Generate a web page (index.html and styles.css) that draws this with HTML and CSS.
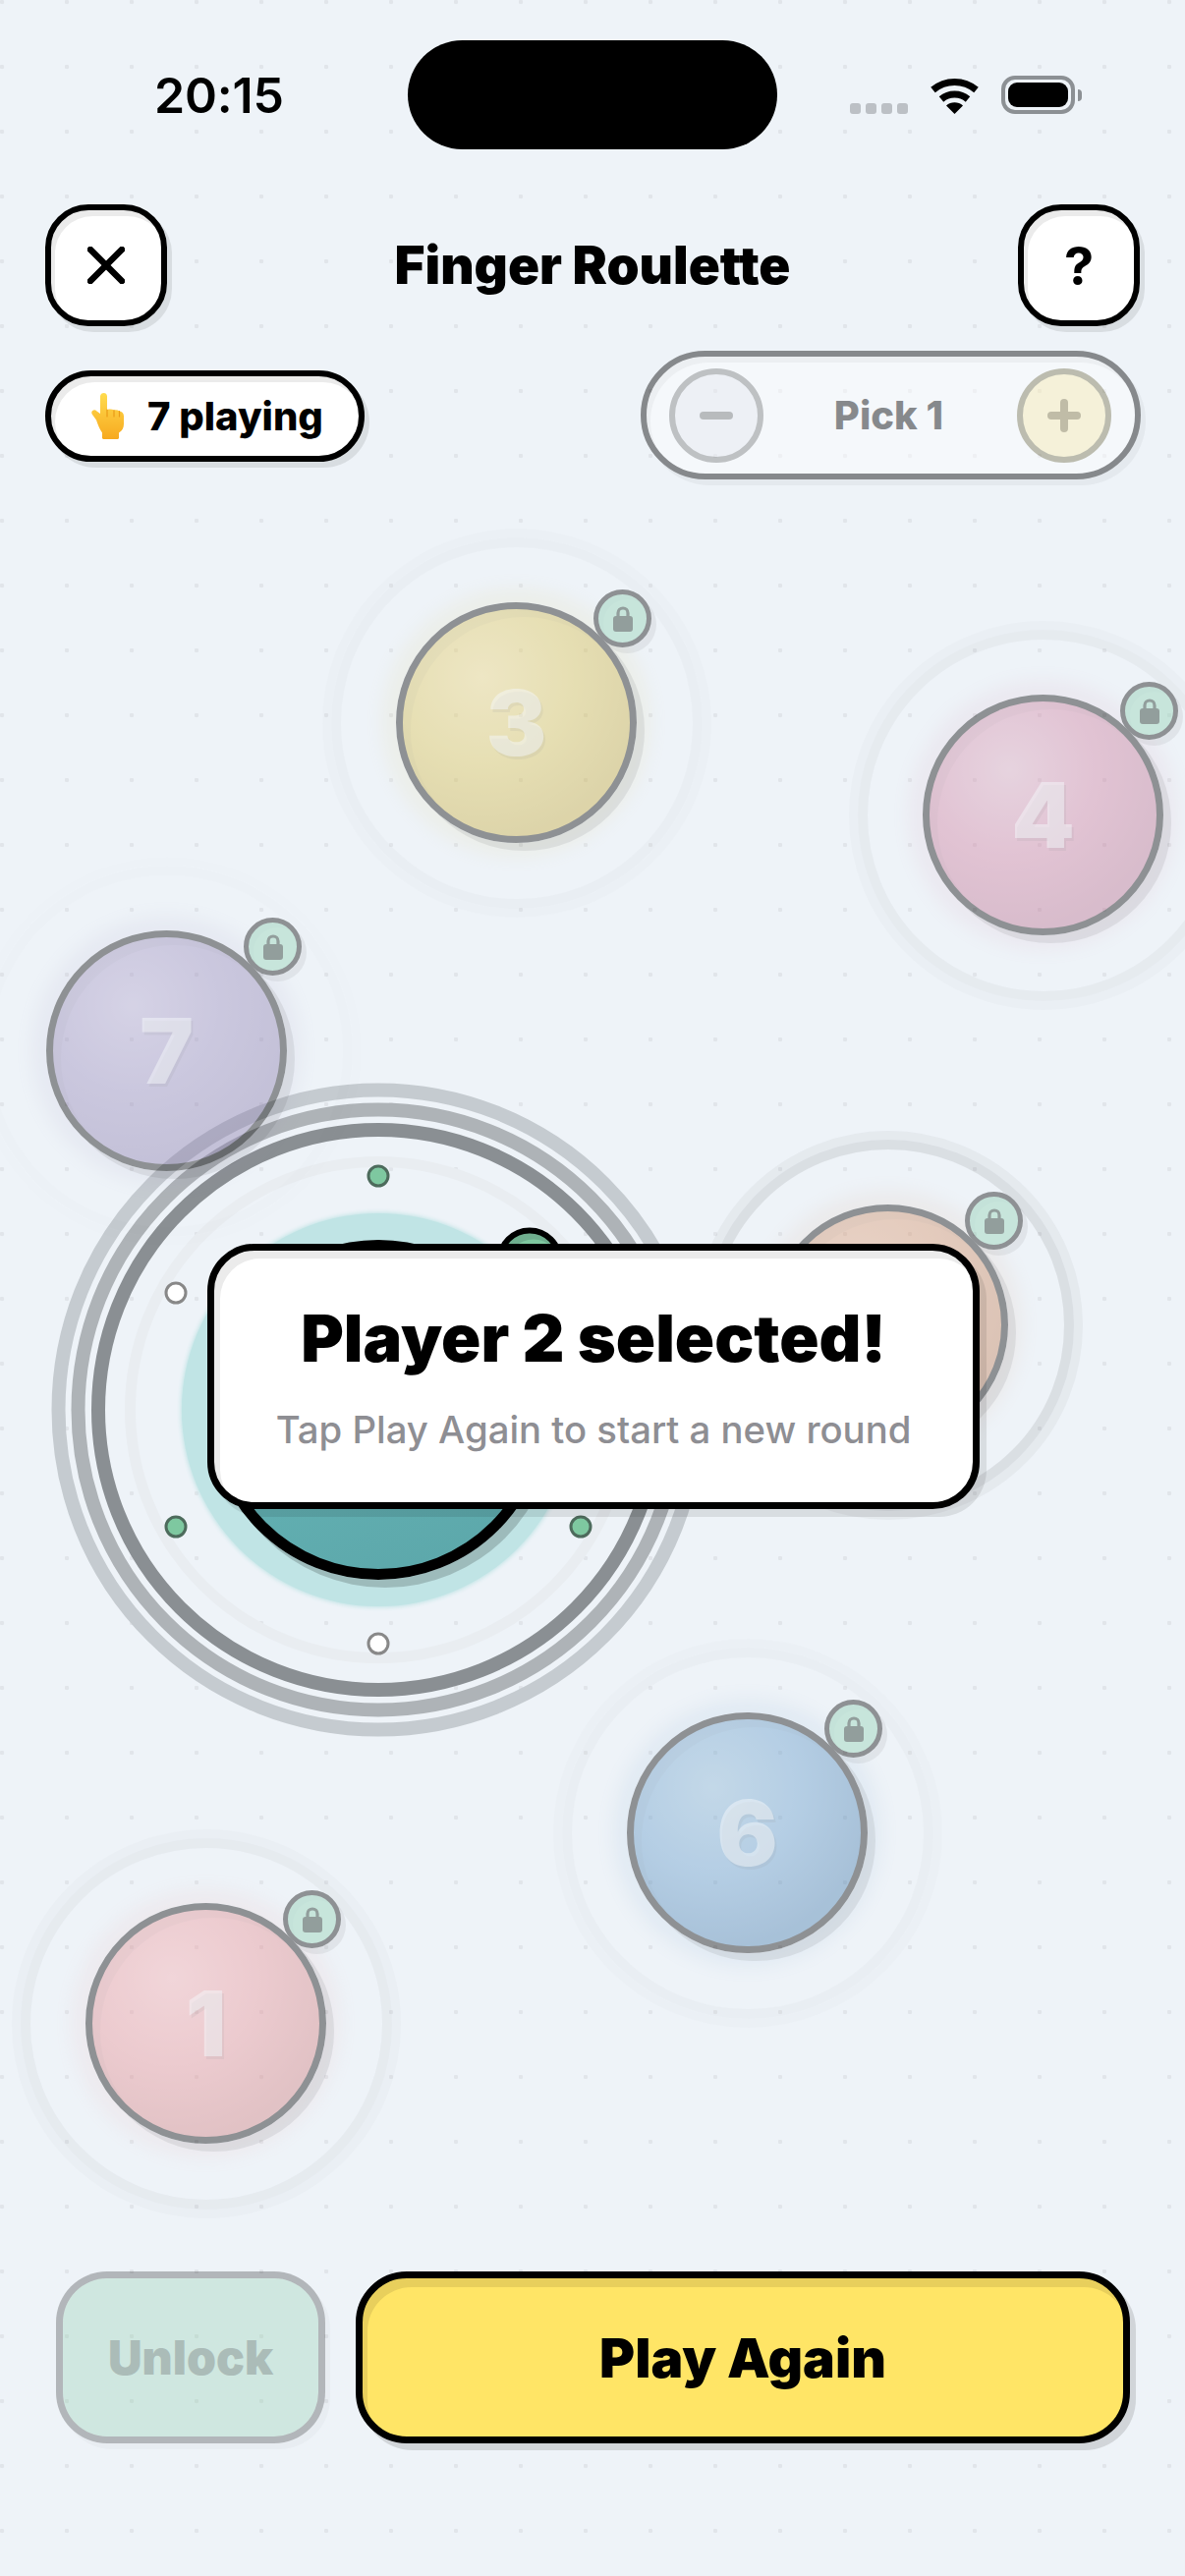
FILE: index.html
```html
<!DOCTYPE html>
<html lang="en">
<head>
  <meta charset="UTF-8" />
  <meta name="viewport" content="width=device-width, initial-scale=1.0"/>
  <title>Finger Roulette</title>
  <link rel="stylesheet" href="styles.css">
</head>
<body>
  <div class="screen">

    <!-- fingers on the table -->
    <div class="stage">
      <div class="chosen">
        <span class="halo halo-1"></span>
        <span class="halo halo-2"></span>
        <span class="halo halo-3"></span>
        <span class="halo halo-4"></span>
        <span class="glow"></span>
        <span class="disc"></span>
        <span class="chosen-badge"></span>
        <span class="spark spark-top"></span>
        <span class="spark spark-left white"></span>
        <span class="spark spark-low-left"></span>
        <span class="spark spark-low-right"></span>
        <span class="spark spark-bottom white"></span>
      </div>

      <div class="player p1 rings-mid">
        <span class="ring ring-in"></span><span class="ring ring-out"></span>
        <div class="coin">1</div>
        <span class="lock"><svg viewBox="0 0 24 30"><path d="M7 14V9a5 5 0 0 1 10 0v5" fill="none" stroke="currentColor" stroke-width="3.2"/><rect x="2" y="12" width="20" height="16" rx="3" fill="currentColor"/></svg></span>
      </div>
      <div class="player p3 rings-low">
        <span class="ring ring-in"></span><span class="ring ring-out"></span>
        <div class="coin">3</div>
        <span class="lock"><svg viewBox="0 0 24 30"><path d="M7 14V9a5 5 0 0 1 10 0v5" fill="none" stroke="currentColor" stroke-width="3.2"/><rect x="2" y="12" width="20" height="16" rx="3" fill="currentColor"/></svg></span>
      </div>
      <div class="player p4 rings-mid">
        <span class="ring ring-in"></span><span class="ring ring-out"></span>
        <div class="coin">4</div>
        <span class="lock"><svg viewBox="0 0 24 30"><path d="M7 14V9a5 5 0 0 1 10 0v5" fill="none" stroke="currentColor" stroke-width="3.2"/><rect x="2" y="12" width="20" height="16" rx="3" fill="currentColor"/></svg></span>
      </div>
      <!-- number of this one sits behind the popup -->
      <div class="player p5 rings-high">
        <span class="ring ring-in"></span><span class="ring ring-out"></span>
        <div class="coin"></div>
        <span class="lock"><svg viewBox="0 0 24 30"><path d="M7 14V9a5 5 0 0 1 10 0v5" fill="none" stroke="currentColor" stroke-width="3.2"/><rect x="2" y="12" width="20" height="16" rx="3" fill="currentColor"/></svg></span>
      </div>
      <div class="player p6 rings-low">
        <span class="ring ring-in"></span><span class="ring ring-out"></span>
        <div class="coin">6</div>
        <span class="lock"><svg viewBox="0 0 24 30"><path d="M7 14V9a5 5 0 0 1 10 0v5" fill="none" stroke="currentColor" stroke-width="3.2"/><rect x="2" y="12" width="20" height="16" rx="3" fill="currentColor"/></svg></span>
      </div>
      <div class="player p7 rings-faint">
        <span class="ring ring-in"></span><span class="ring ring-out"></span>
        <div class="coin">7</div>
        <span class="lock"><svg viewBox="0 0 24 30"><path d="M7 14V9a5 5 0 0 1 10 0v5" fill="none" stroke="currentColor" stroke-width="3.2"/><rect x="2" y="12" width="20" height="16" rx="3" fill="currentColor"/></svg></span>
      </div>

      <div class="result-card">
        <h2>Player 2 selected!</h2>
        <p>Tap Play Again to start a new round</p>
      </div>
    </div>

    <div class="status-bar">
      <div class="clock">20:15</div>
      <div class="island"></div>
      <div class="status-icons">
        <div class="signal"><span></span><span></span><span></span><span></span></div>
        <svg class="wifi" viewBox="0 0 51 38">
          <path d="M3.5 13.5a34 34 0 0 1 44 0" fill="none" stroke="#000" stroke-width="7"/>
          <path d="M12 23a21 21 0 0 1 27 0" fill="none" stroke="#000" stroke-width="7"/>
          <path d="M25.5 38 17 29.5a13 13 0 0 1 17 0z" fill="#000"/>
        </svg>
        <div class="battery"><span></span></div>
        <span class="battery-nub"></span>
      </div>
    </div>

    <div class="top-bar">
      <button class="square-btn" aria-label="Close">
        <svg viewBox="0 0 38 38" width="38" height="38"><path d="M3 3l32 32M35 3L3 35" fill="none" stroke="#000" stroke-width="6.5" stroke-linecap="round"/></svg>
      </button>
      <h1>Finger Roulette</h1>
      <button class="square-btn help">?</button>
    </div>

    <div class="sub-bar">
      <div class="count-pill">
        <svg class="hand" viewBox="0 0 33 47">
          <defs>
            <linearGradient id="skin" x1="0" y1="0" x2="0" y2="1">
              <stop offset="0" stop-color="#ffdc4e"/>
              <stop offset="1" stop-color="#f7a91f"/>
            </linearGradient>
          </defs>
          <path d="M9 3.5C9 1 11 0 12.7 0s3.3 1 3.3 3.5V17c3-.8 5.500-.5 7 .5 2-.6 4-.2 5.500 1 2.500.2 4.500 2 4.500 5v8c0 4-1.500 7-5 9v5c0 1-1 1.500-2 1.500H13c-1 0-2-.5-2-1.500v-5C8 36 6.500 32 5 27.500L1 22c-1-1.500-1-3 .2-4 1.300-1 3-.8 4.300.5L9 21z" fill="url(#skin)"/>
          <path d="M16 17v7M23 17.500V24M28.500 18.500V24" fill="none" stroke="#e99a17" stroke-width="1.200" stroke-linecap="round"/>
        </svg>
        <span>7 playing</span>
      </div>
      <div class="stepper">
        <button class="step-btn minus"><i></i></button>
        <span class="step-label">Pick 1</span>
        <button class="step-btn plus"><i></i><i></i></button>
      </div>
    </div>

    <div class="spacer"></div>

    <div class="bottom-bar">
      <button class="big-btn unlock">Unlock</button>
      <button class="big-btn again">Play Again</button>
    </div>
  </div>
</body>
</html>
```

FILE: styles.css
```css
* {
  box-sizing: border-box;
}

body {
  margin: 0;
  font-family: Inter, "Liberation Sans", sans-serif;
  background: #eef3f8;
}

button {
  font-family: inherit;
  padding: 0;
  cursor: pointer;
}

.screen {
  position: relative;
  width: 1206px;
  height: 2622px;
  overflow: hidden;
  display: flex;
  flex-direction: column;
  background-color: #eef3f8;
  background-image: radial-gradient(circle at 2px 2px, #e1e5ea 2px, transparent 2.6px);
  background-size: 66px 66px;
}

/* status bar */
.status-bar {
  position: relative;
  display: grid;
  grid-template-columns: 415px 376px 415px;
  align-items: center;
  margin-top: 41px;
  height: 111px;
}

.clock {
  padding-left: 157px;
  font-size: 50px;
  font-weight: 600;
  letter-spacing: -0.2px;
  color: #000;
}

.island {
  height: 111px;
  background: #000;
  border-radius: 56px;
}

.status-icons {
  display: flex;
  align-items: center;
  padding-left: 74px;
}

.signal {
  display: flex;
  gap: 5.500px;
  margin-top: 28px;
  margin-right: 22px;
}

.signal span {
  width: 10.500px;
  height: 10.500px;
  border-radius: 3px;
  background: #bcc0c5;
}

.wifi {
  width: 51px;
  height: 38px;
  margin-right: 22px;
}

.battery {
  width: 75px;
  height: 39px;
  padding: 3px;
  border: 4px solid #8c9094;
  border-radius: 14px;
}

.battery span {
  display: block;
  height: 100%;
  border-radius: 9px;
  background: #000;
}

.battery-nub {
  width: 4px;
  height: 12px;
  margin-left: 3px;
  background: #8c9094;
  border-radius: 0 4px 4px 0;
}

/* header */
.top-bar {
  position: relative;
  display: flex;
  justify-content: space-between;
  align-items: center;
  margin-top: 56px;
  padding: 0 46px;
}

.top-bar h1 {
  margin: 0;
  font-size: 53px;
  font-weight: 900;
  color: #000;
}

.square-btn {
  display: flex;
  align-items: center;
  justify-content: center;
  width: 124px;
  height: 124px;
  border: 6px solid #000;
  border-radius: 44px;
  background: #fff;
  color: #000;
  box-shadow: 5px 6px 0 rgba(0, 0, 0, 0.09), inset 4px 6px 0 #ebebeb;
}

.help {
  font-size: 54px;
  font-weight: 700;
}

.sub-bar {
  position: relative;
  display: flex;
  justify-content: space-between;
  align-items: flex-start;
  margin-top: 25px;
  padding: 0 45px 0 46px;
}

.count-pill {
  display: flex;
  align-items: center;
  gap: 24px;
  height: 93px;
  margin-top: 20px;
  padding: 0 36px 0 41px;
  border: 6px solid #000;
  border-radius: 47px;
  background: #fff;
  box-shadow: 5px 6px 0 rgba(0, 0, 0, 0.09), inset 4px 6px 0 #ebebeb;
  font-size: 40px;
  font-weight: 800;
  color: #000;
}

.hand {
  width: 33px;
  height: 47px;
}

.stepper {
  display: flex;
  align-items: center;
  justify-content: space-between;
  width: 509px;
  height: 131px;
  padding: 0 24px 0 23px;
  border: 6px solid #000;
  border-radius: 66px;
  background: #fff;
  opacity: 0.43;
  box-shadow: 5px 6px 0 rgba(0, 0, 0, 0.09), inset 4px 6px 0 #ebebeb;
}

.step-btn {
  position: relative;
  width: 96px;
  height: 96px;
  border: 6px solid #808080;
  border-radius: 50%;
  background: #edeef3;
}

.step-btn i {
  position: absolute;
  left: 25px;
  top: 38px;
  width: 34px;
  height: 8px;
  border-radius: 4px;
  background: #727272;
}

.plus {
  border-color: #7b7651;
  background: #fff0b1;
}

.plus i {
  background: #84753f;
}

.plus i + i {
  left: 38px;
  top: 25px;
  width: 8px;
  height: 34px;
}

.step-label {
  margin-right: 3px;
  font-size: 40px;
  font-weight: 800;
  color: #000;
}

.spacer {
  flex: 1;
}

/* bottom buttons */
.bottom-bar {
  position: relative;
  display: flex;
  gap: 31px;
  padding: 0 56px 135px 57px;
}

.big-btn {
  height: 175px;
  border: 7px solid #000;
  border-radius: 52px;
  font-weight: 900;
}

.unlock {
  width: 274px;
  border-color: rgba(0, 0, 0, 0.25);
  background: rgba(127, 200, 160, 0.27);
  background-clip: padding-box;
  box-shadow: 5px 6px 0 rgba(0, 0, 0, 0.025);
  font-size: 48px;
  color: #abbcb8;
}

.again {
  flex: 1;
  background: #ffe566;
  box-shadow: 6px 7px 0 rgba(0, 0, 0, 0.12), inset 5px 9px 0 #e8cf5c;
  font-size: 55px;
  color: #000;
}

/* table */
.stage {
  position: absolute;
  inset: 0;
}

.chosen {
  position: absolute;
  left: 384.500px;
  top: 1435px;
  width: 0;
  height: 0;
}

.chosen > span {
  position: absolute;
  border-radius: 50%;
  transform: translate(-50%, -50%);
}

.halo-1 {
  width: 665px;
  height: 665px;
  border: 14px solid #c5cbd0;
}

.halo-2 {
  width: 625px;
  height: 625px;
  border: 14px solid #aeb3b7;
}

.halo-3 {
  width: 584px;
  height: 584px;
  border: 14px solid #8a8f93;
}

.halo-4 {
  width: 516px;
  height: 516px;
  border: 11px solid #e9edf1;
}

.glow {
  width: 400px;
  height: 400px;
  background: #c0e4e5;
  box-shadow: 0 0 4px 1px #c0e4e5;
}

.disc {
  width: 346px;
  height: 346px;
  border: 11px solid #000;
  background: linear-gradient(160deg, #6cbcbd, #5ba6a9);
  box-shadow: 7px 8px 0 rgba(0, 0, 0, 0.18);
}

.chosen .chosen-badge {
  left: 154.500px;
  top: -152px;
  width: 67px;
  height: 67px;
  border: 6px solid #000;
  background: #7fc8a0;
  box-shadow: inset 4px 6px 0 #6fae8e;
}

.spark {
  width: 23px;
  height: 23px;
  border: 3px solid #4d6b5c;
  background: #7ec8a0;
}

.spark.white {
  border-color: #888;
  background: #fff;
}

.spark-top {
  left: 0;
  top: -238px;
}

.spark-left {
  left: -206px;
  top: -119px;
}

.spark-low-left {
  left: -206px;
  top: 119px;
}

.spark-low-right {
  left: 206px;
  top: 119px;
}

.spark-bottom {
  left: 0;
  top: 238px;
}

.player {
  position: absolute;
  width: 245px;
  height: 245px;
  opacity: 0.4;
}

.p1 {
  left: 87px;
  top: 1937px;
  --light: #f6aaac;
  --base: #ea9093;
  --dark: #d07a7a;
}

.p3 {
  left: 403px;
  top: 613px;
  --light: #eed478;
  --base: #dcc24e;
  --dark: #c4a736;
}

.p4 {
  left: 939px;
  top: 707px;
  --light: #dca5ba;
  --base: #d07d9e;
  --dark: #b86b8b;
}

.p5 {
  left: 781px;
  top: 1226px;
  --light: #e2a47e;
  --base: #d69166;
  --dark: #c07d54;
}

.p6 {
  left: 638px;
  top: 1743px;
  --light: #85b1d2;
  --base: #6098c8;
  --dark: #3f77a9;
}

.p7 {
  left: 47px;
  top: 947px;
  --light: #b1a3cb;
  --base: #9788b9;
  --dark: #8677a9;
}

.ring {
  position: absolute;
  left: 50%;
  top: 50%;
  border-radius: 50%;
  border-style: solid;
  border-color: rgba(0, 0, 0, var(--ring-alpha));
  transform: translate(-50%, -50%);
}

.ring-in {
  width: 378px;
  height: 378px;
  border-width: 10px;
}

.ring-out {
  width: 396px;
  height: 396px;
  border-width: 9px;
  border-color: rgba(0, 0, 0, calc(var(--ring-alpha) * 0.45));
}

.rings-high {
  --ring-alpha: 0.2;
}

.rings-mid {
  --ring-alpha: 0.08;
}

.rings-low {
  --ring-alpha: 0.04;
}

.rings-faint {
  --ring-alpha: 0.012;
}

.coin {
  position: relative;
  display: flex;
  align-items: center;
  justify-content: center;
  width: 245px;
  height: 245px;
  border: 7px solid #000;
  border-radius: 50%;
  background: radial-gradient(circle at 35% 30%, var(--light), var(--base) 40%, var(--dark) 75%);
  box-shadow: 8px 8px 0 rgba(0, 0, 0, 0.18), inset 8px 8px 0 rgba(0, 0, 0, 0.06), 0 0 16px 14px color-mix(in srgb, var(--base) 20%, transparent);
  font-size: 92px;
  font-weight: 900;
  color: rgba(255, 255, 255, 0.5);
  text-shadow: 2px 3px 0 rgba(0, 0, 0, 0.12);
}

.lock {
  position: absolute;
  left: 201px;
  top: -13px;
  display: flex;
  align-items: center;
  justify-content: center;
  width: 59px;
  height: 59px;
  border: 5px solid #000;
  border-radius: 50%;
  background: #8ed2b2;
  color: #0a2015;
  box-shadow: 5px 6px 0 rgba(0, 0, 0, 0.14), inset 5px 5px 0 rgba(0, 0, 0, 0.04);
}

.lock svg {
  width: 24px;
  height: 30px;
}

/* popup over everything */
.result-card {
  position: absolute;
  left: 211px;
  top: 1266px;
  display: flex;
  flex-direction: column;
  align-items: center;
  width: 786px;
  height: 270px;
  padding-top: 50px;
  border: 7px solid #000;
  border-radius: 48px;
  background: #fff;
  box-shadow: 7px 8px 0 rgba(0, 0, 0, 0.09), inset 6px 8px 0 #ebebeb;
}

.result-card h2 {
  margin: 0;
  font-size: 66.500px;
  line-height: 78px;
  font-weight: 900;
  color: #000;
}

.result-card p {
  margin: 31px 0 0;
  font-size: 38.300px;
  line-height: 46px;
  font-weight: 500;
  color: #8e8e93;
}
```
